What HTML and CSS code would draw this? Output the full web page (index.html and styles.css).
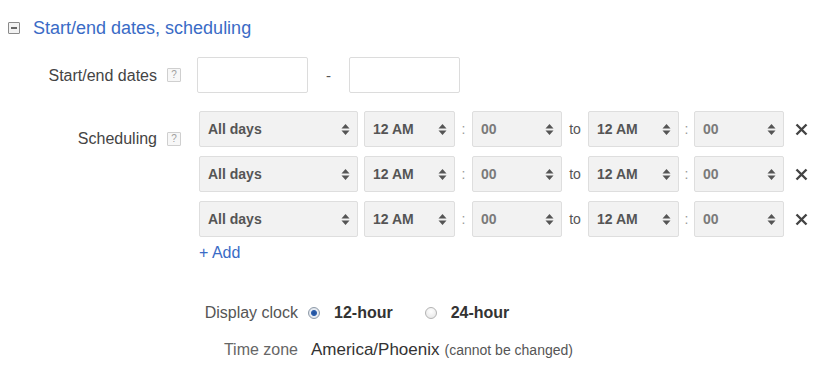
FILE: index.html
```html
<!DOCTYPE html>
<html lang="en">
<head>
  <meta charset="UTF-8">
  <meta name="viewport" content="width=device-width, initial-scale=1.0">
  <title>Start/end dates, scheduling</title>
  <link rel="stylesheet" href="styles.css">
</head>
<body>
  <div class="panel">
    <div class="section-head">
      <span class="toggle"><span class="toggle-bar"></span></span>
      <span class="section-title">Start/end dates, scheduling</span>
    </div>

    <div class="form-row dates-row">
      <div class="label">Start/end dates</div>
      <span class="help">?</span>
      <div class="controls">
        <input type="text" class="date-input">
        <span class="dash">-</span>
        <input type="text" class="date-input">
      </div>
    </div>

    <div class="form-row schedule-row">
      <div class="label label-top">Scheduling</div>
      <span class="help help-top">?</span>
      <div class="controls schedule-list">
        <div class="slot">
          <div class="select sel-days"><span>All days</span><svg class="arrows" width="9" height="13" viewBox="0 0 9 13"><path d="M0.5 5.5 L4.5 1 L8.5 5.5Z M0.5 7.5 L4.5 12 L8.5 7.5Z"/></svg></div>
          <div class="select sel-hour"><span>12 AM</span><svg class="arrows" width="9" height="13" viewBox="0 0 9 13"><path d="M0.5 5.5 L4.5 1 L8.5 5.5Z M0.5 7.5 L4.5 12 L8.5 7.5Z"/></svg></div>
          <span class="sep colon">:</span>
          <div class="select sel-min"><span>00</span><svg class="arrows" width="9" height="13" viewBox="0 0 9 13"><path d="M0.5 5.5 L4.5 1 L8.5 5.5Z M0.5 7.5 L4.5 12 L8.5 7.5Z"/></svg></div>
          <span class="sep to">to</span>
          <div class="select sel-hour"><span>12 AM</span><svg class="arrows" width="9" height="13" viewBox="0 0 9 13"><path d="M0.5 5.5 L4.5 1 L8.5 5.5Z M0.5 7.5 L4.5 12 L8.5 7.5Z"/></svg></div>
          <span class="sep colon colon-2">:</span>
          <div class="select sel-min"><span>00</span><svg class="arrows" width="9" height="13" viewBox="0 0 9 13"><path d="M0.5 5.5 L4.5 1 L8.5 5.5Z M0.5 7.5 L4.5 12 L8.5 7.5Z"/></svg></div>
          <svg class="remove" width="13" height="13" viewBox="0 0 13 13"><path d="M1.5 1.5 L11.5 11.5 M11.5 1.5 L1.5 11.5"/></svg>
        </div>
        <div class="slot">
          <div class="select sel-days"><span>All days</span><svg class="arrows" width="9" height="13" viewBox="0 0 9 13"><path d="M0.5 5.5 L4.5 1 L8.5 5.5Z M0.5 7.5 L4.5 12 L8.5 7.5Z"/></svg></div>
          <div class="select sel-hour"><span>12 AM</span><svg class="arrows" width="9" height="13" viewBox="0 0 9 13"><path d="M0.5 5.5 L4.5 1 L8.5 5.5Z M0.5 7.5 L4.5 12 L8.5 7.5Z"/></svg></div>
          <span class="sep colon">:</span>
          <div class="select sel-min"><span>00</span><svg class="arrows" width="9" height="13" viewBox="0 0 9 13"><path d="M0.5 5.5 L4.5 1 L8.5 5.5Z M0.5 7.5 L4.5 12 L8.5 7.5Z"/></svg></div>
          <span class="sep to">to</span>
          <div class="select sel-hour"><span>12 AM</span><svg class="arrows" width="9" height="13" viewBox="0 0 9 13"><path d="M0.5 5.5 L4.5 1 L8.5 5.5Z M0.5 7.5 L4.5 12 L8.5 7.5Z"/></svg></div>
          <span class="sep colon colon-2">:</span>
          <div class="select sel-min"><span>00</span><svg class="arrows" width="9" height="13" viewBox="0 0 9 13"><path d="M0.5 5.5 L4.5 1 L8.5 5.5Z M0.5 7.5 L4.5 12 L8.5 7.5Z"/></svg></div>
          <svg class="remove" width="13" height="13" viewBox="0 0 13 13"><path d="M1.5 1.5 L11.5 11.5 M11.5 1.5 L1.5 11.5"/></svg>
        </div>
        <div class="slot">
          <div class="select sel-days"><span>All days</span><svg class="arrows" width="9" height="13" viewBox="0 0 9 13"><path d="M0.5 5.5 L4.5 1 L8.5 5.5Z M0.5 7.5 L4.5 12 L8.5 7.5Z"/></svg></div>
          <div class="select sel-hour"><span>12 AM</span><svg class="arrows" width="9" height="13" viewBox="0 0 9 13"><path d="M0.5 5.5 L4.5 1 L8.5 5.5Z M0.5 7.5 L4.5 12 L8.5 7.5Z"/></svg></div>
          <span class="sep colon">:</span>
          <div class="select sel-min"><span>00</span><svg class="arrows" width="9" height="13" viewBox="0 0 9 13"><path d="M0.5 5.5 L4.5 1 L8.5 5.5Z M0.5 7.5 L4.5 12 L8.5 7.5Z"/></svg></div>
          <span class="sep to">to</span>
          <div class="select sel-hour"><span>12 AM</span><svg class="arrows" width="9" height="13" viewBox="0 0 9 13"><path d="M0.5 5.5 L4.5 1 L8.5 5.5Z M0.5 7.5 L4.5 12 L8.5 7.5Z"/></svg></div>
          <span class="sep colon colon-2">:</span>
          <div class="select sel-min"><span>00</span><svg class="arrows" width="9" height="13" viewBox="0 0 9 13"><path d="M0.5 5.5 L4.5 1 L8.5 5.5Z M0.5 7.5 L4.5 12 L8.5 7.5Z"/></svg></div>
          <svg class="remove" width="13" height="13" viewBox="0 0 13 13"><path d="M1.5 1.5 L11.5 11.5 M11.5 1.5 L1.5 11.5"/></svg>
        </div>
        <a href="#" class="add-link">+ Add</a>
      </div>
    </div>

    <div class="settings">
      <div class="set-label">Display clock</div>
      <div class="set-value">
        <span class="radio checked"></span><span class="radio-text">12-hour</span>
        <span class="radio radio-2"></span><span class="radio-text">24-hour</span>
      </div>
      <div class="set-label tz-label">Time zone</div>
      <div class="set-value tz-value">
        <span class="tz-name">America/Phoenix</span>
        <span class="tz-note">(cannot be changed)</span>
      </div>
    </div>
  </div>
</body>
</html>
```

FILE: styles.css
```css
body {
  margin: 0;
  padding: 0;
  background-color: #fff;
  font-family: "Liberation Sans", Arial, sans-serif;
  color: #444;
}

.panel {
  width: 821px;
  height: 378px;
  padding-top: 18px;
  box-sizing: border-box;
}

/* section header */
.section-head {
  display: flex;
  align-items: center;
  padding-left: 8px;
  height: 20px;
}

.toggle {
  width: 10px;
  height: 10px;
  border: 1px solid #8a8a8a;
  border-radius: 1px;
  background-color: #f2f2f2;
  display: flex;
  align-items: center;
  justify-content: center;
}

.toggle-bar {
  width: 6px;
  height: 2px;
  background-color: #666;
}

.section-title {
  margin-left: 13px;
  font-size: 18px;
  line-height: 20px;
  color: #3a6bc6;
}

/* form rows */
.form-row {
  display: flex;
  align-items: center;
}

.dates-row {
  margin-top: 19px;
}

.schedule-row {
  margin-top: 18px;
  align-items: flex-start;
}

.label {
  width: 157px;
  text-align: right;
  font-size: 16px;
  line-height: 19px;
  color: #444;
}

.label-top {
  margin-top: 18px;
}

.help {
  width: 12px;
  height: 12px;
  margin-left: 10px;
  border: 1px solid #cfcfcf;
  border-radius: 1px;
  background-color: #f7f7f7;
  color: #a0a0a0;
  font-size: 10px;
  line-height: 12px;
  text-align: center;
}

.help-top {
  margin-top: 21px;
}

.controls {
  margin-left: 16px;
  display: flex;
  align-items: center;
}

.date-input {
  width: 111px;
  height: 36px;
  box-sizing: border-box;
  border: 1px solid #dcdcdc;
  border-radius: 2px;
  background-color: #fff;
  margin: 0;
  padding: 0 6px;
  font-family: inherit;
  font-size: 14px;
}

.dash {
  width: 41px;
  text-align: center;
  font-size: 15px;
  color: #555;
}

/* scheduling */
.schedule-list {
  flex-direction: column;
  align-items: flex-start;
  margin-left: 18px;
}

.slot {
  display: flex;
  align-items: center;
  height: 36px;
  margin-bottom: 9px;
}

.select {
  height: 36px;
  box-sizing: border-box;
  border: 1px solid #dedede;
  border-radius: 2px;
  background-color: #f2f2f2;
  display: flex;
  align-items: center;
  justify-content: space-between;
  padding: 0 7px 0 8px;
  font-size: 14px;
  font-weight: bold;
  color: #555;
}

.sel-days {
  width: 159px;
  margin-right: 6px;
}

.sel-hour {
  width: 91px;
}

.sel-min {
  width: 90px;
}

.sel-min span {
  color: #7a7a7a;
}

.arrows {
  fill: #555;
}

.sep {
  text-align: center;
  font-size: 14px;
  color: #777;
}

.colon {
  width: 17px;
  color: #999;
}

.colon-2 {
  width: 15px;
}

.to {
  width: 26px;
  color: #555;
}

.remove {
  margin-left: 11px;
  stroke: #444;
  stroke-width: 2.4;
}

.add-link {
  margin-top: -3px;
  font-size: 16px;
  line-height: 19px;
  color: #3a6bc6;
  text-decoration: none;
}

/* clock settings */
.settings {
  display: grid;
  grid-template-columns: 298px auto;
  column-gap: 10px;
  row-gap: 18px;
  margin-top: 41px;
  align-items: center;
}

.set-label {
  text-align: right;
  font-size: 16px;
  line-height: 19px;
  color: #555;
}

.set-value {
  display: flex;
  align-items: center;
}

.radio {
  width: 10px;
  height: 10px;
  border: 1px solid #b3b3b3;
  border-radius: 50%;
  background: radial-gradient(circle at 50% 35%, #fff, #e3e3e3);
}

.radio.checked {
  border-color: #8e9aa8;
  background: radial-gradient(circle, #1f4f9a 0, #2d5fae 2.5px, #e9eef5 3.5px, #d4d9e0 100%);
}

.radio-2 {
  margin-left: 32px;
}

.radio-text {
  margin-left: 14px;
  font-size: 16px;
  line-height: 19px;
  font-weight: bold;
  color: #333;
}

.tz-label {
  color: #666;
}

.tz-value {
  margin-left: 3px;
}

.tz-name {
  font-size: 17px;
  line-height: 19px;
  color: #333;
}

.tz-note {
  margin-left: 5px;
  font-size: 14px;
  color: #555;
}
```
